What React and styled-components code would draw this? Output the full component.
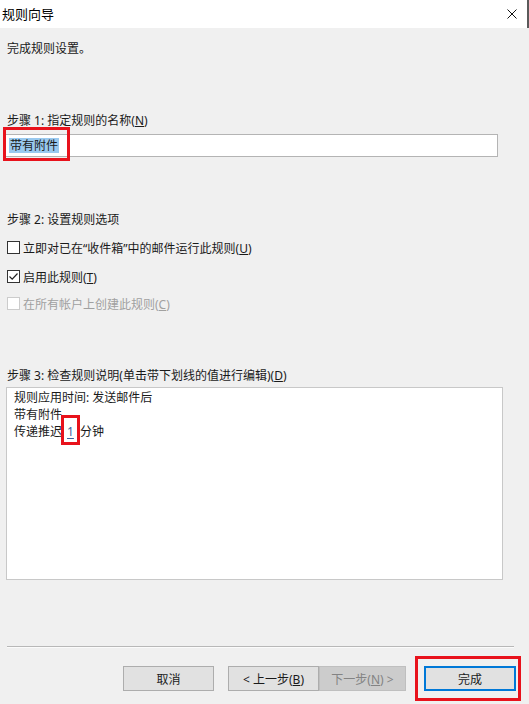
import React from 'react';
import styled, { createGlobalStyle } from 'styled-components';

const GlobalStyle = createGlobalStyle`
  html, body {
    margin: 0;
    padding: 0;
    background: #f0f0f0;
  }
  body {
    font-family: "Noto Sans", "Noto Sans CJK SC", sans-serif;
    font-size: 12px;
    color: #1a1a1a;
  }
`;

const Dialog = styled.div`
  width: 529px;
  height: 704px;
  background: #f0f0f0;
  overflow: hidden;
`;

const TitleBar = styled.div`
  height: 28px;
  background: #fff;
  display: flex;
  align-items: center;
  justify-content: space-between;
  padding-left: 2px;
  box-sizing: border-box;
  border-right: 2px solid #5a5a5a;
`;

const Title = styled.span`
  font-size: 13px;
  color: #000;
  line-height: 17px;
`;

const CloseButton = styled.div`
  width: 10px;
  height: 10px;
  margin-right: 10px;
  display: flex;
`;

const Content = styled.div`
  padding: 0 7px;
`;

const Text = styled.div`
  line-height: 17px;
  white-space: nowrap;
  margin-top: ${(p) => p.$top || 0}px;
  color: ${(p) => (p.$disabled ? '#a0a0a0' : '#1a1a1a')};
`;

const InputWrap = styled.div`
  position: relative;
  margin: 5px 0 0 -3px;
  width: 494px;
`;

const NameInput = styled.div`
  height: 23px;
  box-sizing: border-box;
  background: #fff;
  border: 1px solid #b4b4b4;
  display: flex;
  align-items: center;
  padding-left: 4px;
`;

const Selected = styled.span`
  background: #99c9ef;
  line-height: 15px;
  font-size: 12px;
  padding: 0 1px;
`;

const InputMark = styled.div`
  position: absolute;
  left: -1px;
  top: -7px;
  width: 67px;
  height: 34px;
  box-sizing: border-box;
  border: 3px solid #e8121c;
`;

const CheckRow = styled.label`
  display: flex;
  align-items: center;
  gap: 3px;
  height: 17px;
  margin-top: ${(p) => p.$top}px;
  color: ${(p) => (p.$disabled ? '#a0a0a0' : '#1a1a1a')};
`;

const Box = styled.span`
  width: 13px;
  height: 13px;
  box-sizing: border-box;
  background: #fff;
  border: 1px solid ${(p) => (p.$disabled ? '#cccccc' : '#333333')};
  display: flex;
  align-items: center;
  justify-content: center;
`;

const Summary = styled.div`
  margin: 3px 0 0 -1px;
  width: 497px;
  height: 193px;
  box-sizing: border-box;
  background: #fff;
  border: 1px solid #c8c8c8;
  padding: 1px 0 0 7px;
`;

const ValueCell = styled.span`
  position: relative;
  display: inline-block;
  padding: 0 6px 0 5px;
  line-height: 17px;
`;

const Link = styled.span`
  color: #3a5f9e;
  text-decoration: underline;
  text-underline-offset: 2px;
`;

const ValueMark = styled.span`
  position: absolute;
  left: -1px;
  right: 0;
  top: -8px;
  bottom: -5px;
  border: 3px solid #e8121c;
`;

const Separator = styled.div`
  margin-top: 66px;
  width: 507px;
  border-top: 1px solid #b8b8b8;
  border-bottom: 1px solid #fbfbfb;
`;

const ButtonRow = styled.div`
  display: flex;
  margin-top: 18px;
  padding-left: 116px;
`;

const Button = styled.div`
  position: relative;
  width: ${(p) => p.$w || 91}px;
  height: 25px;
  box-sizing: border-box;
  margin-left: ${(p) => p.$gap || 0}px;
  background: ${(p) => (p.$disabled ? '#cccccc' : '#e1e1e1')};
  border: 1px solid ${(p) => (p.$primary ? '#0078d7' : p.$disabled ? '#bfbfbf' : '#adadad')};
  box-shadow: ${(p) => (p.$primary ? 'inset 0 0 0 1px #0078d7' : 'none')};
  color: ${(p) => (p.$disabled ? '#838383' : '#1a1a1a')};
  display: flex;
  align-items: center;
  justify-content: center;
  white-space: nowrap;
`;

const ButtonMark = styled.div`
  position: absolute;
  left: -10px;
  right: -6px;
  top: -11px;
  bottom: -11px;
  border: 3px solid #e8121c;
`;

const Check = () => (
  <svg width="11" height="11" viewBox="0 0 11 11">
    <path d="M1.5 5.5 L4.2 8.2 L9.5 2.5" fill="none" stroke="#222" strokeWidth="1.2" />
  </svg>
);

const CheckItem = ({ checked, disabled, top, children }) => (
  <CheckRow $top={top} $disabled={disabled}>
    <Box $disabled={disabled}>{checked && <Check />}</Box>
    <span>{children}</span>
  </CheckRow>
);

export default function App() {
  return (
    <Dialog>
      <GlobalStyle />
      <TitleBar>
        <Title>规则向导</Title>
        <CloseButton>
          <svg width="10" height="10" viewBox="0 0 10 10">
            <path d="M0.5 0.5 L9.5 9.5 M9.5 0.5 L0.5 9.5" stroke="#111" strokeWidth="1" />
          </svg>
        </CloseButton>
      </TitleBar>
      <Content>
        <Text $top={12}>完成规则设置。</Text>

        <Text $top={55}>步骤 1: 指定规则的名称(<u>N</u>)</Text>
        <InputWrap>
          <NameInput>
            <Selected>带有附件</Selected>
          </NameInput>
          <InputMark />
        </InputWrap>

        <Text $top={54}>步骤 2: 设置规则选项</Text>
        <CheckItem top={11}>立即对已在“收件箱”中的邮件运行此规则(<u>U</u>)</CheckItem>
        <CheckItem top={12} checked>启用此规则(<u>T</u>)</CheckItem>
        <CheckItem top={10} disabled>在所有帐户上创建此规则(<u>C</u>)</CheckItem>

        <Text $top={55}>步骤 3: 检查规则说明(单击带下划线的值进行编辑)(<u>D</u>)</Text>
        <Summary>
          <Text>规则应用时间: 发送邮件后</Text>
          <Text>带有附件</Text>
          <Text>
            传递推迟
            <ValueCell>
              <Link>1</Link>
              <ValueMark />
            </ValueCell>
            分钟
          </Text>
        </Summary>

        <Separator />

        <ButtonRow>
          <Button><span>取消</span></Button>
          <Button $gap={14}><span>&lt; 上一步(<u>B</u>)</span></Button>
          <Button $disabled $w={87}><span>下一步(<u>N</u>) &gt;</span></Button>
          <Button $gap={18} $w={92} $primary>
            <span>完成</span>
            <ButtonMark />
          </Button>
        </ButtonRow>
      </Content>
    </Dialog>
  );
}
